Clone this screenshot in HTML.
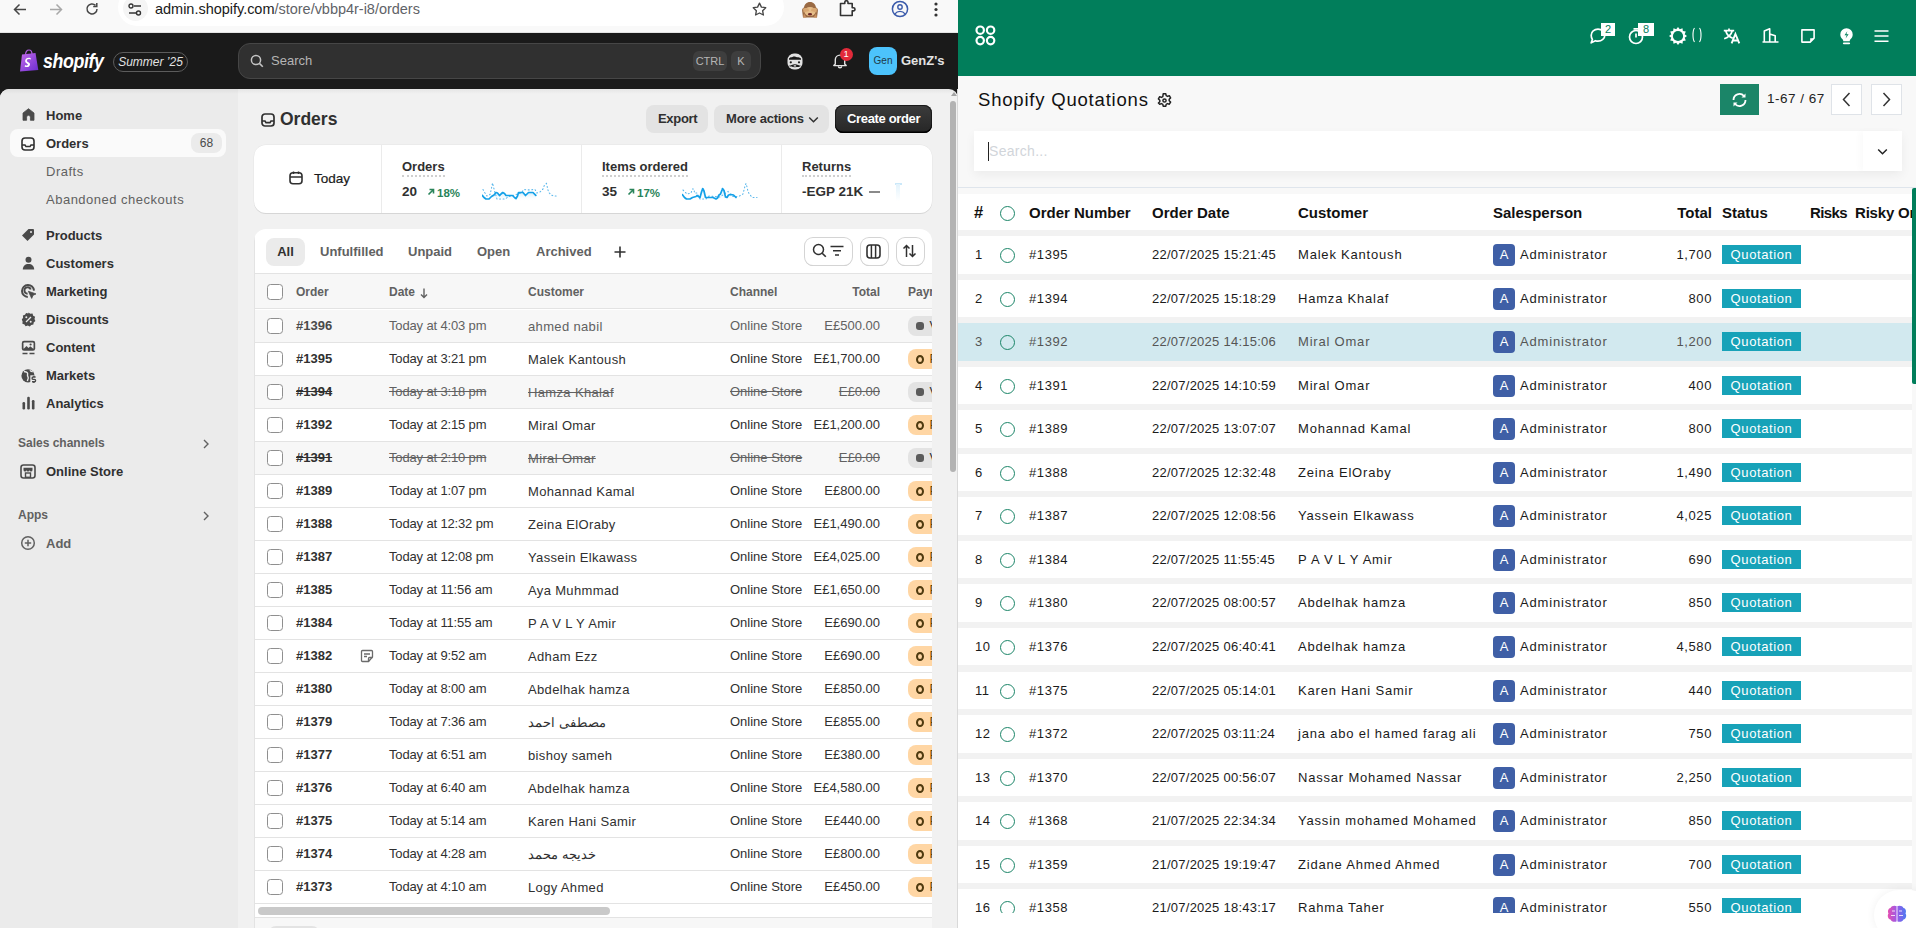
<!DOCTYPE html>
<html><head><meta charset="utf-8"><title>Orders</title>
<style>
*{margin:0;padding:0;box-sizing:border-box}
html,body{width:1916px;height:928px;overflow:hidden;background:#f8f8f8;font-family:"Liberation Sans",sans-serif}
.a{position:absolute;white-space:nowrap}
svg{position:absolute;display:block}
#L{position:absolute;left:0;top:0;width:958px;height:928px;overflow:hidden;background:#1a1a1a}
#chrome{position:absolute;left:0;top:0;width:958px;height:33px;background:#f9f9f9;border-bottom:1px solid #e4e4e4}
#pill{position:absolute;left:118px;top:-12px;width:666px;height:38px;background:#fff;border-radius:19px}
#tune{position:absolute;left:123px;top:-4px;width:25px;height:25px;border-radius:13px;background:#f5f5f5}
.url{left:155px;top:1px;font-size:14.5px;color:#1a1a1a;letter-spacing:-0.02px}
.url span{color:#5f6368}
#panel{position:absolute;left:0;top:89px;width:958px;height:839px;background:#f1f1f1;border-radius:9px 9px 0 0;overflow:hidden}
#side{position:absolute;left:0;top:0;width:238px;height:839px;background:#ebebeb}
.nav{position:absolute;left:46px;font-size:13px;font-weight:700;color:#303030;line-height:16px}
.nav.sub{color:#616161;font-weight:400;font-size:13px;letter-spacing:0.5px}
.sec{position:absolute;left:18px;font-size:12px;font-weight:700;color:#616161;line-height:16px}
.btn{position:absolute;top:105px;white-space:nowrap;height:28px;border-radius:8px;background:#e3e3e3;font-size:13px;font-weight:700;color:#303030;line-height:28px;padding:0 12px}
#card1{position:absolute;left:254px;top:145px;width:678px;height:68px;background:#fff;border-radius:12px;box-shadow:0 1px 0 #d6d6d6, 0 0 0 0.5px #e6e6e6}
.div{position:absolute;top:0;width:1px;height:68px;background:#ebebeb}
.slab{position:absolute;font-size:13px;font-weight:700;color:#303030;line-height:16px;border-bottom:2px dotted #cfcfcf;padding-bottom:0}
.sval{position:absolute;font-size:13px;font-weight:700;color:#303030;line-height:16px}
.pct{position:absolute;font-size:12px;font-weight:700;color:#29845a;line-height:16px}
#card2{position:absolute;left:254px;top:229px;width:678px;height:720px;background:#fff;border-radius:12px 12px 0 0;overflow:hidden}
.tab{position:absolute;top:9px;height:28px;line-height:28px;font-size:13px;font-weight:700;color:#616161;padding:0 8px;border-radius:8px}
.tab.on{background:#ebebeb;color:#303030}
.tbtn{position:absolute;top:8.5px;height:27px;border-radius:8px;background:#fff;box-shadow:0 0 0 1px #d4d4d4, 0 1px 0 #c4c4c4}
#thead{position:absolute;left:0;top:44px;width:678px;height:36px;background:#f7f7f7;border-top:1px solid #e3e3e3;border-bottom:1px solid #e3e3e3}
.th{position:absolute;top:11px;font-size:12px;font-weight:700;color:#616161;line-height:14px}
.lrow{position:absolute;left:0;width:678px;height:33px;background:#fff;border-bottom:1px solid #e3e3e3}
.lrow.gray{background:#f7f7f7}
.lrow span{position:absolute;white-space:nowrap;line-height:16px;top:8px;font-size:13px;color:#303030}
.cb{left:13px;top:8px!important;width:15.5px;height:15.5px;border:1px solid #8f8f8f;border-radius:3.5px;background:#fff}
.c-num{left:42px;font-weight:700}
.c-date{left:135px;letter-spacing:-0.15px}
.c-cust{left:274px;top:9px!important;letter-spacing:0.35px}
.c-cust.ar{font-size:13px!important;direction:rtl;letter-spacing:0}
.c-ch{left:476px}
.c-tot{right:52px}
.gray.arch span{color:#616161}
.gray.arch .c-num{color:#4a4a4a}
.cancel .c-num,.cancel .c-date,.cancel .c-cust,.cancel .c-ch,.cancel .c-tot{text-decoration:line-through;color:#616161}
.cancel .c-num{color:#303030}
.pbadge{left:654px;top:6px!important;width:60px;height:20px!important;border-radius:8px}
.pbadge.o{background:#ffd6a4}
.pbadge.g{background:#e3e3e3}
.pbadge i{position:absolute;left:8px;top:5.5px;width:8px;height:9px;border-radius:50%}
.pbadge b{position:absolute;left:21.5px;top:2px;font-size:12.5px;font-weight:400;color:#5e4200;line-height:16px}
.pbadge.g b{color:#303030}
.pbadge.o i{border:2px solid #4f3a0f}
.pbadge.g i{background:#5a5a5a;border-radius:3px;height:8px;top:6px}

#hscroll{position:absolute;left:4px;top:678px;width:352px;height:8px;border-radius:4px;background:#c9c9c9}
#foot{position:absolute;left:0;top:688px;width:678px;height:40px;background:#f7f7f7;border-top:1px solid #e3e3e3}
#vscroll{position:absolute;left:957px;top:89px;width:1px;height:839px;background:#d9d9d9}
#vthumb{position:absolute;left:950px;top:101px;width:6px;height:371px;border-radius:3px;background:#b3b3b3}

#R{position:absolute;left:958px;top:0;width:958px;height:928px;overflow:hidden;background:#f8f8f8}
#ghead{position:absolute;left:0;top:0;width:958px;height:76px;background:#017e5b}
.rt{position:absolute;white-space:nowrap;color:#1b1b1b}
#title{left:20px;top:89px;font-size:18.5px;color:#111;letter-spacing:0.8px;line-height:22px}
#refresh{position:absolute;left:762px;top:84px;width:39px;height:31px;background:#1b8568}
.pgbtn{position:absolute;top:84px;width:31px;height:31px;background:#fff;border:1px solid #dfe3e8}
#pgtext{left:809px;top:91px;font-size:13.5px;color:#222;letter-spacing:0.5px}
#search{position:absolute;left:16px;top:131px;width:928px;height:40px;background:#fff;box-shadow:0 4px 10px rgba(0,0,0,0.05)}
#sph{left:31px;top:141.5px;font-size:14px;color:#d1d5da;letter-spacing:0.3px;line-height:18px}
#caret{position:absolute;left:30px;top:142px;width:1px;height:19px;background:#222}
#hline{position:absolute;left:0;top:187px;width:958px;height:1px;background:#dfe5ec}
#rhead{position:absolute;left:0;top:194px;width:954px;height:36px;background:#fff;box-shadow:0 3px 5px rgba(0,0,0,0.04)}
.rth{position:absolute;top:10px;font-size:15px;font-weight:700;color:#111;line-height:18px;white-space:nowrap}
.rrow{position:absolute;left:0;width:954px;height:37.5px;background:#fff}
.rrow.hl{background:#d2e9ef}
.rrow span{position:absolute;white-space:nowrap;font-size:13px;color:#1b1b1b;letter-spacing:0.6px;line-height:16px;top:11px}
.rrow.hl span{color:#555}
.r-date{letter-spacing:0.25px!important}
.r-idx{left:17px}
.rc{left:42px;top:12px!important;width:15px;height:15px;border:1.5px solid #1b8568;border-radius:50%}
.r-num{left:71px}
.r-date{left:194px}
.r-cust{left:340px;letter-spacing:0.8px!important}
.r-av{left:535px;top:8px!important;width:22px;height:22px;border-radius:4px;background:#3f5fa6;color:#fff!important;text-align:center;line-height:22px!important;font-size:13px!important;letter-spacing:0!important}
.r-sp{left:562px;letter-spacing:0.85px!important}
.r-tot{right:200px}
.r-st{left:764px;top:9px!important;width:79px;height:19px;background:#17a2b8;color:#fff!important;text-align:center;line-height:19px!important}
#rscroll{position:absolute;left:954px;top:188px;width:4px;height:196px;background:#017e5b;border-radius:2px 0 0 2px}

</style></head>
<body>
<div id="L">
 <div id="chrome">
  <div id="pill"></div>
  <div id="tune"></div>
  <svg style="left:13px;top:3px" width="14" height="13" viewBox="0 0 14 13"><path d="M13 6.5H2M6.5 1.5L1.5 6.5l5 5" fill="none" stroke="#474747" stroke-width="1.5"/></svg>
  <svg style="left:49px;top:3px" width="14" height="13" viewBox="0 0 14 13"><path d="M1 6.5h11M7.5 1.5l5 5-5 5" fill="none" stroke="#a8a8a8" stroke-width="1.5"/></svg>
  <svg style="left:85px;top:2px" width="14" height="14" viewBox="0 0 14 14"><path d="M12 7a5 5 0 1 1-1.5-3.6" fill="none" stroke="#474747" stroke-width="1.5"/><path d="M11.8 1v3.6H8.2" fill="none" stroke="#474747" stroke-width="1.5"/></svg>
  <svg style="left:128px;top:3px" width="14" height="13" viewBox="0 0 14 13"><circle cx="3" cy="3" r="2" fill="none" stroke="#333" stroke-width="1.4"/><path d="M6 3h7" stroke="#333" stroke-width="1.5"/><circle cx="10.5" cy="10" r="2" fill="none" stroke="#333" stroke-width="1.4"/><path d="M1 10h7" stroke="#333" stroke-width="1.5"/></svg>
  <div class="a url">admin.shopify.com<span>/store/vbbp4r-i8/orders</span></div>
  <svg style="left:751px;top:1px" width="17" height="17" viewBox="0 0 24 24"><path d="M12 3l2.7 5.6 6.1.8-4.4 4.3 1.1 6.1L12 16.9l-5.5 2.9 1.1-6.1-4.4-4.3 6.1-.8z" fill="none" stroke="#474747" stroke-width="1.9" stroke-linejoin="round"/></svg>
  <svg style="left:801px;top:1px" width="18" height="17" viewBox="0 0 18 17"><path d="M9 1C5.5 1 3.3 3.5 3 6.5 1.5 7 .8 8.5 1.2 10.5L2 16.5h14l.8-6C17.2 8.5 16.5 7 15 6.5 14.7 3.5 12.5 1 9 1z" fill="#9a6a44"/><ellipse cx="9" cy="10.5" rx="5.6" ry="4.6" fill="#e6be8a"/><path d="M2 7.5c1.5-.8 3.5-.8 5.5.3L8 10 2.5 11.5z" fill="#d9a873"/><path d="M16 7.5c-1.5-.8-3.5-.8-5.5.3L10 10l5.5 1.5z" fill="#d9a873"/><ellipse cx="9" cy="13.2" rx="2.1" ry="1.3" fill="#6b2626"/><path d="M2 16.5l1-4 2.5 4zM16 16.5l-1-4-2.5 4z" fill="#c89060"/></svg>
  <svg style="left:839px;top:0px" width="17" height="17" viewBox="0 0 17 17"><path d="M1.5 3.5h4.3V2.3a1.6 1.6 0 0 1 3.2 0v1.2h4.2v4.2h1.2a1.6 1.6 0 0 1 0 3.2h-1.2v4.6H1.5z" fill="none" stroke="#333" stroke-width="1.6" stroke-linejoin="round"/></svg>
  <svg style="left:891px;top:0px" width="18" height="18" viewBox="0 0 18 18"><circle cx="9" cy="9" r="7.6" fill="none" stroke="#3b5bab" stroke-width="1.5"/><circle cx="9" cy="7" r="2.2" fill="none" stroke="#3b5bab" stroke-width="1.4"/><path d="M4 13.8c1.5-2 3-2.4 5-2.4s3.5.4 5 2.4" fill="none" stroke="#3b5bab" stroke-width="1.4"/></svg>
  <svg style="left:933px;top:1px" width="6" height="16" viewBox="0 0 6 16"><circle cx="3" cy="3" r="1.6" fill="#333"/><circle cx="3" cy="8.5" r="1.6" fill="#333"/><circle cx="3" cy="14" r="1.6" fill="#333"/></svg>
 </div>
 <!-- shopify topbar -->
 <svg style="left:19px;top:49px" width="20" height="23" viewBox="0 0 20 23"><defs><linearGradient id="bg1" x1="0" y1="0" x2="1" y2="1"><stop offset="0" stop-color="#c56bea"/><stop offset="1" stop-color="#6a2bd0"/></linearGradient></defs><path d="M3 5.5l13.5-1.5 2.8 17L1 22.5z" fill="url(#bg1)"/><path d="M6.5 6c0-3 1.5-5 3.5-5s3 2 3 4.5" fill="none" stroke="#b05de0" stroke-width="1.2"/><path d="M12 10.5c-.6-.4-1.4-.6-2.2-.5-1.3.1-2 .9-1.9 1.7.1 1.5 3 1.6 3.1 3.5.1 1.6-1.2 2.8-3 2.9-1 0-1.9-.3-2.4-.7l.5-1.5c.6.4 1.2.6 1.8.6.7 0 1.1-.4 1-.9-.1-1-2.6-1.2-2.8-3.3-.1-2 1.4-3.4 3.6-3.6.8 0 1.4.1 1.8.3z" fill="#fff"/></svg>
 <div class="a" style="left:43px;top:49px;font-size:21px;font-weight:700;font-style:italic;color:#fff;letter-spacing:-0.5px;line-height:24px;transform:scaleX(0.85);transform-origin:0 0">shopify</div>
 <div class="a" style="left:113px;top:52px;width:75px;height:20px;border:1px solid #5c5c5c;border-radius:10px;font-size:12px;font-style:italic;color:#e3e3e3;line-height:18px;text-align:center;letter-spacing:0px">Summer ’25</div>
 <div class="a" style="left:238px;top:43px;width:523px;height:36px;background:#303030;border:1px solid #464646;border-radius:12px"></div>
 <svg style="left:250px;top:54px" width="14" height="14" viewBox="0 0 14 14"><circle cx="6" cy="6" r="4.6" fill="none" stroke="#c4c4c4" stroke-width="1.5"/><path d="M9.4 9.4l3.4 3.4" stroke="#c4c4c4" stroke-width="1.6"/></svg>
 <div class="a" style="left:271px;top:53px;font-size:13px;color:#b5b5b5;line-height:16px">Search</div>
 <div class="a" style="left:693px;top:51px;width:34px;height:20px;background:#3e3e3e;border-radius:6px;font-size:11px;color:#b5b5b5;text-align:center;line-height:20px">CTRL</div>
 <div class="a" style="left:731px;top:51px;width:20px;height:20px;background:#3e3e3e;border-radius:6px;font-size:11px;color:#b5b5b5;text-align:center;line-height:20px">K</div>
 <svg style="left:787px;top:52.5px" width="16" height="17" viewBox="0 0 16 17"><rect x="0.5" y="0.5" width="15" height="16" rx="6.5" fill="#e3e3e3"/><path d="M2 5.5c1-1.6 2.5-1.2 3.5-1.6 1.4-.6 2.5-.3 3.5 0 1.5.4 3.5 0 5 1.6v1.2H2z" fill="#1a1a1a"/><circle cx="3.8" cy="9.3" r="1.1" fill="#1a1a1a"/><circle cx="12" cy="9.3" r="1.1" fill="#1a1a1a"/><path d="M2 12.8c1.8-.2 3.5-1.6 5.9-1.6s4.1 1.4 6 1.6c-1 1.3-3.2 1.4-6 1.4s-5-.1-5.9-1.4z" fill="#1a1a1a"/><rect x="6.6" y="12.3" width="2.6" height="1.3" rx=".6" fill="#e3e3e3"/></svg>
 <svg style="left:831.5px;top:53px" width="16" height="16" viewBox="0 0 16 16"><path d="M3.3 11V6.8a4.7 4.7 0 0 1 9.4 0V11l1.5 1.6H1.8z" fill="none" stroke="#e3e3e3" stroke-width="1.4" stroke-linejoin="round"/><path d="M6.4 13.2a1.6 1.6 0 0 0 3.2 0" fill="none" stroke="#e3e3e3" stroke-width="1.4"/></svg>
 <div class="a" style="left:840px;top:48px;width:12.5px;height:12.5px;border-radius:6.5px;background:#e22a3a;color:#fff;font-size:9.5px;font-weight:400;text-align:center;line-height:12.5px">1</div>
 <div class="a" style="left:869px;top:47px;width:28px;height:28px;border-radius:8px;background:#4cc3fc;font-size:10px;color:#1e3a4a;text-align:center;line-height:28px">Gen</div>
 <div class="a" style="left:901px;top:53px;font-size:13px;font-weight:700;color:#e3e3e3;line-height:16px">GenZ's</div>

 <div id="panel">
  <div id="side"></div>
  <div class="a" style="left:0;top:0;width:958px;height:5px;background:linear-gradient(rgba(0,0,0,0.05),rgba(0,0,0,0))"></div>
 </div>
 <!-- sidebar content (page coords) -->
 <svg style="left:22px;top:108px" width="13" height="13" viewBox="0 0 13 13"><path d="M6.5.7L1 5v7.3h3.6V9.2a1.9 1.9 0 0 1 3.8 0v3.1H12V5z" fill="#4a4a4a" stroke="#4a4a4a" stroke-width="0.8" stroke-linejoin="round"/></svg>
 <div class="nav" style="top:108px">Home</div>
 <div class="a" style="left:10px;top:129px;width:216px;height:28px;background:#fafafa;border-radius:8px"></div>
 <div class="a" style="left:191px;top:133px;width:31px;height:20px;background:#ebebeb;border-radius:8px;font-size:12px;color:#4a4a4a;text-align:center;line-height:20px">68</div>
 <svg style="left:21px;top:137px" width="14" height="14" viewBox="0 0 14 14"><rect x="1" y="1" width="12" height="12" rx="3" fill="none" stroke="#303030" stroke-width="1.6"/><path d="M1 8h3l1 1.6h4L10 8h3" fill="none" stroke="#303030" stroke-width="1.5"/></svg>
 <div class="nav" style="top:136px">Orders</div>
 <div class="nav sub" style="top:164px">Drafts</div>
 <div class="nav sub" style="top:192px">Abandoned checkouts</div>
 <svg style="left:21px;top:228px" width="14" height="14" viewBox="0 0 14 14"><path d="M7.5 1H12a1 1 0 0 1 1 1v4.5L6.5 13 1 7.5z" fill="#4a4a4a"/><circle cx="10" cy="4" r="1" fill="#ebebeb"/></svg>
 <div class="nav" style="top:228px">Products</div>
 <svg style="left:22px;top:256px" width="13" height="14" viewBox="0 0 13 14"><circle cx="6.5" cy="3.8" r="3" fill="#4a4a4a"/><path d="M.8 13.5c0-3.5 2.4-5.5 5.7-5.5s5.7 2 5.7 5.5z" fill="#4a4a4a"/></svg>
 <div class="nav" style="top:256px">Customers</div>
 <svg style="left:21px;top:284px" width="16" height="16" viewBox="0 0 16 16"><path d="M13 6.6A6 6 0 1 0 6.8 13" fill="none" stroke="#4a4a4a" stroke-width="2"/><path d="M9.7 5.6A3.2 3.2 0 1 0 6.6 9.7" fill="none" stroke="#4a4a4a" stroke-width="1.9"/><path d="M7.4 7.3l7.6 2.6-3 1.4-1.3 3.1z" fill="#4a4a4a" stroke="#4a4a4a" stroke-width="0.8" stroke-linejoin="round"/></svg>
 <div class="nav" style="top:284px">Marketing</div>
 <svg style="left:21px;top:312px" width="15" height="15" viewBox="0 0 15 15"><path d="M7.5.5l1.8 1.3 2.2-.2.7 2.1 1.9 1.1-.6 2.2.9 2-1.7 1.4-.3 2.2-2.2.3-1.4 1.7-2-1-2.2.7-1.1-1.9-2.1-.7.2-2.2L.8 7.5l1.3-1.8-.2-2.2 2.1-.7L5.1 1 7.3 1.6z" fill="#4a4a4a"/><path d="M5 10l5-5" stroke="#ebebeb" stroke-width="1.3"/><circle cx="5.3" cy="5.3" r="1" fill="#ebebeb"/><circle cx="9.7" cy="9.7" r="1" fill="#ebebeb"/></svg>
 <div class="nav" style="top:312px">Discounts</div>
 <svg style="left:21px;top:340px" width="15" height="15" viewBox="0 0 15 15"><rect x="0.8" y="0.8" width="13.4" height="10" rx="2.2" fill="#4a4a4a"/><rect x="2.5" y="2.5" width="10" height="6.6" rx="0.8" fill="#ebebeb"/><path d="M2.5 9.1l3-3.2 2 2 1.8-1.7 3.2 2.9z" fill="#4a4a4a"/><circle cx="9.6" cy="4.5" r="1.1" fill="#4a4a4a"/><path d="M1.5 13.5h5M8.5 13.5h5" stroke="#4a4a4a" stroke-width="1.5"/></svg>
 <div class="nav" style="top:340px">Content</div>
 <svg style="left:21px;top:368px" width="16" height="16" viewBox="0 0 16 16"><circle cx="7" cy="7.8" r="6.6" fill="#4a4a4a"/><path d="M3 3.5c1.6.4 2.6.2 3.4 1.4.8 1.3-.6 2.3.5 3.6 1 1.2.2 2.7-.6 4.6" fill="none" stroke="#ebebeb" stroke-width="1.4"/><path d="M9 2.2c.5 1.2 1.8 1.5 2.8 1.3" fill="none" stroke="#ebebeb" stroke-width="1.3"/><rect x="9.3" y="7.3" width="6.7" height="8.7" fill="#ebebeb"/><path d="M14.6 9h-2.3a1.2 1.2 0 0 0 0 2.4h1.1a1.2 1.2 0 0 1 0 2.4H11M12.9 7.8V9M12.9 13.8v1.3" fill="none" stroke="#4a4a4a" stroke-width="1.4"/></svg>
 <div class="nav" style="top:368px">Markets</div>
 <svg style="left:22px;top:396px" width="13" height="14" viewBox="0 0 13 14"><rect x="0.5" y="6" width="2.6" height="7.5" rx="1.2" fill="#4a4a4a"/><rect x="5.2" y="0.8" width="2.6" height="12.7" rx="1.2" fill="#4a4a4a"/><rect x="9.9" y="4" width="2.6" height="9.5" rx="1.2" fill="#4a4a4a"/></svg>
 <div class="nav" style="top:396px">Analytics</div>
 <div class="sec" style="top:435px">Sales channels</div>
 <svg style="left:202px;top:439px" width="8" height="10" viewBox="0 0 8 10"><path d="M2 1l4 4-4 4" fill="none" stroke="#616161" stroke-width="1.4"/></svg>
 <svg style="left:20px;top:464px" width="16" height="15" viewBox="0 0 16 15"><rect x="1" y="1" width="14" height="13" rx="2.5" fill="none" stroke="#4a4a4a" stroke-width="1.6"/><path d="M3.5 3.8h9v2.3a1.5 1.5 0 0 1-3 0 1.5 1.5 0 0 1-3 0 1.5 1.5 0 0 1-3 0z" fill="#4a4a4a"/><rect x="5.5" y="9" width="5" height="4.3" fill="none" stroke="#4a4a4a" stroke-width="1.4"/></svg>
 <div class="nav" style="top:464px">Online Store</div>
 <div class="sec" style="top:507px">Apps</div>
 <svg style="left:202px;top:511px" width="8" height="10" viewBox="0 0 8 10"><path d="M2 1l4 4-4 4" fill="none" stroke="#616161" stroke-width="1.4"/></svg>
 <svg style="left:20px;top:535px" width="16" height="16" viewBox="0 0 16 16"><circle cx="8" cy="8" r="6.3" fill="none" stroke="#616161" stroke-width="1.5"/><path d="M8 4.8v6.4M4.8 8h6.4" stroke="#616161" stroke-width="1.5"/></svg>
 <div class="nav" style="top:536px;color:#616161">Add</div>

 <!-- main header -->
 <svg style="left:261px;top:112.5px" width="14" height="14" viewBox="0 0 14 14"><rect x="1" y="1" width="12" height="12" rx="3" fill="none" stroke="#303030" stroke-width="1.7"/><path d="M1 8h3l1 1.6h4L10 8h3" fill="none" stroke="#303030" stroke-width="1.6"/></svg>
 <div class="a" style="left:280px;top:109px;font-size:17.5px;font-weight:700;color:#303030;line-height:20px">Orders</div>
 <div class="btn" style="left:646px;width:62px;letter-spacing:-0.3px">Export</div>
 <div class="btn" style="left:714px;width:115px;letter-spacing:-0.2px">More actions</div>
 <svg style="left:808px;top:116px" width="11" height="8" viewBox="0 0 11 8"><path d="M1.2 1.5l4.3 4.3 4.3-4.3" fill="none" stroke="#303030" stroke-width="1.5"/></svg>
 <div class="btn" style="left:835px;top:105px;width:97px;height:28px;line-height:28px;letter-spacing:-0.35px;background:linear-gradient(#3c3c3c,#262626);color:#fff;box-shadow:inset 0 -1.5px 0 #000, inset 0 0 0 1px #1a1a1a">Create order</div>

 <div id="card1">
  <div class="div" style="left:127px"></div>
  <div class="div" style="left:327px"></div>
  <div class="div" style="left:527px"></div>
  <svg style="left:35px;top:26px" width="14" height="14" viewBox="0 0 14 14"><rect x="1" y="1.8" width="12" height="11" rx="3" fill="none" stroke="#303030" stroke-width="1.6"/><path d="M1 6h12M4.5 .5v2.5M9.5 .5v2.5" stroke="#303030" stroke-width="1.5"/></svg>
  <div class="sval" style="left:60px;top:26px;font-weight:400;color:#1a1a1a;font-size:13.5px;-webkit-text-stroke:0.2px #1a1a1a">Today</div>
  <div class="slab" style="left:148px;top:14px">Orders</div>
  <div class="sval" style="left:148px;top:39px;font-size:13.5px">20</div>
  <svg style="left:173px;top:43px" width="8" height="8" viewBox="0 0 8 8"><path d="M1.5 6.5L6.5 1.5M2.5 1.5h4v4" fill="none" stroke="#29845a" stroke-width="1.6"/></svg>
  <div class="pct" style="left:183px;top:39.5px;font-size:11.5px">18%</div>
  <div class="slab" style="left:348px;top:14px">Items ordered</div>
  <div class="sval" style="left:348px;top:39px;font-size:13.5px">35</div>
  <svg style="left:373px;top:43px" width="8" height="8" viewBox="0 0 8 8"><path d="M1.5 6.5L6.5 1.5M2.5 1.5h4v4" fill="none" stroke="#29845a" stroke-width="1.6"/></svg>
  <div class="pct" style="left:383px;top:39.5px;font-size:11.5px">17%</div>
  <div class="slab" style="left:548px;top:14px">Returns</div>
  <div class="sval" style="left:548px;top:39px;font-size:13.5px">-EGP 21K</div>
  <div class="a" style="left:615px;top:46px;width:11px;height:1.5px;background:#8a8a8a"></div>
  <svg style="left:228px;top:36px" width="80" height="22" viewBox="0 0 80 22"><defs><linearGradient id="fg228" x1="0" y1="0" x2="0" y2="1"><stop offset="0" stop-color="#bfe3f8"/><stop offset="1" stop-color="#ffffff" stop-opacity="0"/></linearGradient></defs><path d="M0.3,14.4 L0.3,14.4 L2.0,16.5 L4.0,18.0 L7.0,18.0 L9.5,15.5 L12.0,14.0 L14.0,11.5 L15.5,12.0 L17.5,14.6 L19.0,13.0 L20.7,11.5 L22.5,12.5 L24.0,14.5 L30.5,14.5 L32.5,16.5 L34.0,17.7 L35.5,15.0 L36.5,11.5 L41.0,11.5 L43.5,14.5 L46.5,11.5 L51.0,11.5 L53.8,14.4 L53.8,20 L0.3,20 Z" fill="url(#fg228)" opacity="0.7"/><polyline points="1.0,8.5 3.0,12.0 5.0,15.0 8.0,13.5 9.0,9.5 10.5,2.0 11.5,5.8 12.5,10.0 15.0,18.0 19.0,18.0 23.0,18.0 26.0,16.0 39.0,12.0 42.0,8.5 45.0,9.0 53.0,8.5 55.0,12.0 58.0,11.0 61.0,8.0 62.5,4.0 64.5,2.5 65.5,7.0 66.5,11.0 69.0,14.0 72.0,15.0 76.0,15.0" fill="none" stroke="#5cb8ec" stroke-width="1.1" stroke-dasharray="0.9 2.6" stroke-linecap="round"/><polyline points="0.3,14.4 2.0,16.5 4.0,18.0 7.0,18.0 9.5,15.5 12.0,14.0 14.0,11.5 15.5,12.0 17.5,14.6 19.0,13.0 20.7,11.5 22.5,12.5 24.0,14.5 30.5,14.5 32.5,16.5 34.0,17.7 35.5,15.0 36.5,11.5 41.0,11.5 43.5,14.5 46.5,11.5 51.0,11.5 53.8,14.4" fill="none" stroke="#13a0e8" stroke-width="1.7" stroke-linejoin="round" stroke-linecap="round"/></svg>
  <svg style="left:428px;top:36px" width="80" height="22" viewBox="0 0 80 22"><defs><linearGradient id="fg428" x1="0" y1="0" x2="0" y2="1"><stop offset="0" stop-color="#bfe3f8"/><stop offset="1" stop-color="#ffffff" stop-opacity="0"/></linearGradient></defs><path d="M0.3,13.6 L0.3,13.6 L2.5,16.5 L4.5,18.0 L8.0,18.0 L10.5,16.5 L14.0,15.5 L15.0,14.5 L18.0,16.5 L19.5,11.0 L20.7,7.5 L22.0,10.0 L23.5,16.5 L31.0,16.5 L34.0,18.0 L35.5,17.0 L37.0,14.0 L38.5,13.0 L40.0,9.0 L40.5,7.5 L42.0,9.5 L43.5,16.0 L45.0,16.5 L46.5,14.0 L49.0,13.5 L51.5,14.0 L54.0,16.5 L54.0,20 L0.3,20 Z" fill="url(#fg428)" opacity="0.7"/><polyline points="1.0,9.0 5.0,13.0 9.0,12.0 10.5,8.0 12.0,8.0 12.5,12.0 15.0,12.0 18.0,18.0 20.0,18.0 24.0,18.0 27.0,15.0 38.0,16.0 46.0,10.5 50.0,15.0 53.0,16.0 57.5,15.0 61.0,13.0 62.0,9.0 63.0,5.0 64.0,2.5 65.0,6.0 66.0,10.5 67.5,13.5 70.5,16.5 75.0,16.5" fill="none" stroke="#5cb8ec" stroke-width="1.1" stroke-dasharray="0.9 2.6" stroke-linecap="round"/><polyline points="0.3,13.6 2.5,16.5 4.5,18.0 8.0,18.0 10.5,16.5 14.0,15.5 15.0,14.5 18.0,16.5 19.5,11.0 20.7,7.5 22.0,10.0 23.5,16.5 31.0,16.5 34.0,18.0 35.5,17.0 37.0,14.0 38.5,13.0 40.0,9.0 40.5,7.5 42.0,9.5 43.5,16.0 45.0,16.5 46.5,14.0 49.0,13.5 51.5,14.0 54.0,16.5" fill="none" stroke="#13a0e8" stroke-width="1.7" stroke-linejoin="round" stroke-linecap="round"/></svg>
  <div class="a" style="left:641px;top:38px;width:7px;height:1.5px;background:#cbe8f9"></div><div class="a" style="left:642px;top:39px;width:4px;height:17px;background:linear-gradient(#e3f3fc,#fff)"></div>
 </div>

 <div id="card2">
  <div class="tab on" style="left:12px;width:39px;text-align:center">All</div>
  <div class="tab" style="left:58px">Unfulfilled</div>
  <div class="tab" style="left:146px">Unpaid</div>
  <div class="tab" style="left:215px">Open</div>
  <div class="tab" style="left:274px">Archived</div>
  <svg style="left:359px;top:16px" width="14" height="14" viewBox="0 0 14 14"><path d="M7 1.5v11M1.5 7h11" stroke="#303030" stroke-width="1.6"/></svg>
  <div class="tbtn" style="left:550.5px;width:47px"></div>
  <svg style="left:558px;top:14px" width="16" height="16" viewBox="0 0 16 16"><circle cx="6.5" cy="6.5" r="5" fill="none" stroke="#303030" stroke-width="1.5"/><path d="M10.2 10.2l3.6 3.6" stroke="#303030" stroke-width="1.6"/></svg>
  <svg style="left:576px;top:16px" width="14" height="12" viewBox="0 0 14 12"><path d="M0.5 1.5h13M3 5.8h8M5 10h4" stroke="#303030" stroke-width="1.5"/></svg>
  <div class="tbtn" style="left:606.5px;width:27px"></div>
  <svg style="left:612px;top:15px" width="15" height="15" viewBox="0 0 15 15"><rect x="1" y="1" width="13" height="13" rx="3" fill="none" stroke="#303030" stroke-width="1.6"/><path d="M5.4 1v13M9.6 1v13" stroke="#303030" stroke-width="1.5"/></svg>
  <div class="tbtn" style="left:642.5px;width:27px"></div>
  <svg style="left:648px;top:15px" width="15" height="14" viewBox="0 0 15 14"><path d="M4.5 13V1.5M1.5 4.5l3-3 3 3" fill="none" stroke="#303030" stroke-width="1.5"/><path d="M10.5 1v11.5M7.5 9.5l3 3 3-3" fill="none" stroke="#303030" stroke-width="1.5"/></svg>
  <div id="thead">
   <span style="position:absolute;left:13px;top:10px;width:15.5px;height:15.5px;border:1px solid #8f8f8f;border-radius:3.5px;background:#fff"></span>
   <div class="th" style="left:42px">Order</div>
   <div class="th" style="left:135px">Date</div><svg style="left:166px;top:13.5px" width="8" height="11" viewBox="0 0 8 11"><path d="M4 0.5v9M1 6.5l3 3 3-3" fill="none" stroke="#616161" stroke-width="1.4"/></svg>
   <div class="th" style="left:274px">Customer</div>
   <div class="th" style="left:476px">Channel</div>
   <div class="th" style="right:52px">Total</div>
   <div class="th" style="left:654px">Payment</div>
  </div>
<div class="lrow gray arch" style="top:81px"><span class="cb"></span><span class="c-num">#1396</span><span class="c-date">Today at 4:03 pm</span><span class="c-cust">ahmed nabil</span><span class="c-ch">Online Store</span><span class="c-tot">E£500.00</span><span class="pbadge g"><i></i><b>Voided</b></span></div>
<div class="lrow" style="top:114px"><span class="cb"></span><span class="c-num">#1395</span><span class="c-date">Today at 3:21 pm</span><span class="c-cust">Malek Kantoush</span><span class="c-ch">Online Store</span><span class="c-tot">E£1,700.00</span><span class="pbadge o"><i></i><b>Payment pending</b></span></div>
<div class="lrow gray cancel" style="top:147px"><span class="cb"></span><span class="c-num">#1394</span><span class="c-date">Today at 3:18 pm</span><span class="c-cust">Hamza Khalaf</span><span class="c-ch">Online Store</span><span class="c-tot">E£0.00</span><span class="pbadge g"><i></i><b>Voided</b></span></div>
<div class="lrow" style="top:180px"><span class="cb"></span><span class="c-num">#1392</span><span class="c-date">Today at 2:15 pm</span><span class="c-cust">Miral Omar</span><span class="c-ch">Online Store</span><span class="c-tot">E£1,200.00</span><span class="pbadge o"><i></i><b>Payment pending</b></span></div>
<div class="lrow gray cancel" style="top:213px"><span class="cb"></span><span class="c-num">#1391</span><span class="c-date">Today at 2:10 pm</span><span class="c-cust">Miral Omar</span><span class="c-ch">Online Store</span><span class="c-tot">E£0.00</span><span class="pbadge g"><i></i><b>Voided</b></span></div>
<div class="lrow" style="top:246px"><span class="cb"></span><span class="c-num">#1389</span><span class="c-date">Today at 1:07 pm</span><span class="c-cust">Mohannad Kamal</span><span class="c-ch">Online Store</span><span class="c-tot">E£800.00</span><span class="pbadge o"><i></i><b>Payment pending</b></span></div>
<div class="lrow" style="top:279px"><span class="cb"></span><span class="c-num">#1388</span><span class="c-date">Today at 12:32 pm</span><span class="c-cust">Zeina ElOraby</span><span class="c-ch">Online Store</span><span class="c-tot">E£1,490.00</span><span class="pbadge o"><i></i><b>Payment pending</b></span></div>
<div class="lrow" style="top:312px"><span class="cb"></span><span class="c-num">#1387</span><span class="c-date">Today at 12:08 pm</span><span class="c-cust">Yassein Elkawass</span><span class="c-ch">Online Store</span><span class="c-tot">E£4,025.00</span><span class="pbadge o"><i></i><b>Payment pending</b></span></div>
<div class="lrow" style="top:345px"><span class="cb"></span><span class="c-num">#1385</span><span class="c-date">Today at 11:56 am</span><span class="c-cust">Aya Muhmmad</span><span class="c-ch">Online Store</span><span class="c-tot">E£1,650.00</span><span class="pbadge o"><i></i><b>Payment pending</b></span></div>
<div class="lrow" style="top:378px"><span class="cb"></span><span class="c-num">#1384</span><span class="c-date">Today at 11:55 am</span><span class="c-cust">P A V L Y Amir</span><span class="c-ch">Online Store</span><span class="c-tot">E£690.00</span><span class="pbadge o"><i></i><b>Payment pending</b></span></div>
<div class="lrow" style="top:411px"><span class="cb"></span><span class="c-num">#1382</span><svg class="note" style="left:106px;top:9px" width="14" height="14" viewBox="0 0 14 14"><path d="M2.5 1.5h9a1 1 0 0 1 1 1v5.5l-4 4.5H2.5a1 1 0 0 1-1-1v-9a1 1 0 0 1 1-1z" fill="none" stroke="#6b6b6b" stroke-width="1.3"/><path d="M4 5h6M4 7.5h3" stroke="#6b6b6b" stroke-width="1.3"/><path d="M8.5 12.5v-3a1 1 0 0 1 1-1h3" fill="none" stroke="#6b6b6b" stroke-width="1.3"/></svg><span class="c-date">Today at 9:52 am</span><span class="c-cust">Adham Ezz</span><span class="c-ch">Online Store</span><span class="c-tot">E£690.00</span><span class="pbadge o"><i></i><b>Payment pending</b></span></div>
<div class="lrow" style="top:444px"><span class="cb"></span><span class="c-num">#1380</span><span class="c-date">Today at 8:00 am</span><span class="c-cust">Abdelhak hamza</span><span class="c-ch">Online Store</span><span class="c-tot">E£850.00</span><span class="pbadge o"><i></i><b>Payment pending</b></span></div>
<div class="lrow" style="top:477px"><span class="cb"></span><span class="c-num">#1379</span><span class="c-date">Today at 7:36 am</span><span class="c-cust ar">مصطفى احمد</span><span class="c-ch">Online Store</span><span class="c-tot">E£855.00</span><span class="pbadge o"><i></i><b>Payment pending</b></span></div>
<div class="lrow" style="top:510px"><span class="cb"></span><span class="c-num">#1377</span><span class="c-date">Today at 6:51 am</span><span class="c-cust">bishoy sameh</span><span class="c-ch">Online Store</span><span class="c-tot">E£380.00</span><span class="pbadge o"><i></i><b>Payment pending</b></span></div>
<div class="lrow" style="top:543px"><span class="cb"></span><span class="c-num">#1376</span><span class="c-date">Today at 6:40 am</span><span class="c-cust">Abdelhak hamza</span><span class="c-ch">Online Store</span><span class="c-tot">E£4,580.00</span><span class="pbadge o"><i></i><b>Payment pending</b></span></div>
<div class="lrow" style="top:576px"><span class="cb"></span><span class="c-num">#1375</span><span class="c-date">Today at 5:14 am</span><span class="c-cust">Karen Hani Samir</span><span class="c-ch">Online Store</span><span class="c-tot">E£440.00</span><span class="pbadge o"><i></i><b>Payment pending</b></span></div>
<div class="lrow" style="top:609px"><span class="cb"></span><span class="c-num">#1374</span><span class="c-date">Today at 4:28 am</span><span class="c-cust ar">خديجه محمد</span><span class="c-ch">Online Store</span><span class="c-tot">E£800.00</span><span class="pbadge o"><i></i><b>Payment pending</b></span></div>
<div class="lrow" style="top:642px"><span class="cb"></span><span class="c-num">#1373</span><span class="c-date">Today at 4:10 am</span><span class="c-cust">Logy Ahmed</span><span class="c-ch">Online Store</span><span class="c-tot">E£450.00</span><span class="pbadge o"><i></i><b>Payment pending</b></span></div>
  <div id="hscroll"></div>
  <div id="foot"></div>
  <div class="a" style="left:0;top:0;width:1px;height:720px;background:#e3e3e3"></div>
  <div class="a" style="left:14px;top:697px;width:52px;height:28px;border-radius:8px;background:#e3e3e3"></div>
 </div>
 <div id="vscroll"></div>
 <svg style="left:950px;top:91px" width="8" height="6" viewBox="0 0 8 6"><path d="M1 5l3-4 3 4z" fill="#a3a3a3"/></svg>
 <div id="vthumb"></div>
</div>

<div id="R">
 <div id="ghead">
  <svg style="left:17px;top:25px" width="21" height="21" viewBox="0 0 21 21"><circle cx="5.2" cy="5.2" r="3.7" fill="none" stroke="#fff" stroke-width="2.2"/><circle cx="15.6" cy="5.2" r="3.7" fill="none" stroke="#fff" stroke-width="2.2"/><circle cx="5.2" cy="15.6" r="3.7" fill="none" stroke="#fff" stroke-width="2.2"/><circle cx="15.6" cy="15.6" r="3.7" fill="none" stroke="#fff" stroke-width="2.2"/></svg>
  <!-- chat -->
  <svg style="left:631px;top:27px" width="18" height="18" viewBox="0 0 18 18"><path d="M9 2.2c3.8 0 6.8 2.6 6.8 6s-3 6-6.8 6c-.9 0-1.8-.2-2.6-.5L2.2 15.8l1.2-3.3C2.6 11.4 2.2 10 2.2 8.2c0-3.4 3-6 6.8-6z" fill="none" stroke="#fff" stroke-width="1.7" stroke-linejoin="round"/></svg>
  <div class="rt" style="left:643px;top:23px;width:14px;height:13px;background:#fff;color:#017e5b;font-size:11px;text-align:center;line-height:13px">2</div>
  <!-- timer -->
  <svg style="left:670px;top:27px" width="17" height="18" viewBox="0 0 17 18"><circle cx="8" cy="10" r="6.5" fill="none" stroke="#fff" stroke-width="1.7"/><path d="M8 6.5v4M5.5 1.8h5" stroke="#fff" stroke-width="1.7"/></svg>
  <div class="rt" style="left:680px;top:23px;width:16px;height:13px;background:#fff;color:#017e5b;font-size:11px;text-align:center;line-height:13px">8</div>
  <!-- sun -->
  <svg style="left:711px;top:26.5px" width="18" height="18" viewBox="0 0 18 18"><path d="M9.00 0.00 L10.79 2.34 L13.50 1.21 L13.88 4.12 L16.79 4.50 L15.66 7.21 L18.00 9.00 L15.66 10.79 L16.79 13.50 L13.88 13.88 L13.50 16.79 L10.79 15.66 L9.00 18.00 L7.21 15.66 L4.50 16.79 L4.12 13.88 L1.21 13.50 L2.34 10.79 L0.00 9.00 L2.34 7.21 L1.21 4.50 L4.12 4.12 L4.50 1.21 L7.21 2.34Z" fill="#fff"/><circle cx="9" cy="9" r="5.1" fill="#017e5b"/></svg>
  <svg style="left:733px;top:27px" width="12" height="16" viewBox="0 0 12 16"><path d="M3.5 1C1.5 3.5 1.5 12.5 3.5 15M8.5 1c2 2.5 2 11.5 0 14" fill="none" stroke="#fff" stroke-width="1.1"/></svg>
  <!-- translate -->
  <svg style="left:765px;top:28px" width="18" height="16" viewBox="0 0 18 16"><path d="M0.8 2.6h10.4M6 0.6v2M2.8 3c.9 3.6 3.3 6 7 7.3M9.2 3C8.2 6.8 5.6 9.3 1.2 10.8" fill="none" stroke="#fff" stroke-width="1.7"/><path d="M8.6 15.3l3.8-9.3 3.9 9.3M10 12.5h4.8" fill="none" stroke="#fff" stroke-width="1.9"/></svg>
  <!-- building -->
  <svg style="left:804px;top:28px" width="17" height="15" viewBox="0 0 17 15"><path d="M0.5 14h16M2.3 14V3l5.4-2.2V14M7.7 6l5.5 1.8V14" fill="none" stroke="#fff" stroke-width="1.6" stroke-linejoin="round"/></svg>
  <!-- note -->
  <svg style="left:843px;top:29px" width="14" height="14" viewBox="0 0 14 14"><path d="M0.9 0.9h12.2v8.2l-4 4H0.9z" fill="none" stroke="#fff" stroke-width="1.6" stroke-linejoin="round"/><path d="M13 9.2H9.2V13z" fill="#fff"/></svg>
  <!-- bulb -->
  <svg style="left:882px;top:28px" width="13" height="17" viewBox="0 0 13 17"><path d="M6.5 0.3a6.2 6.2 0 0 1 6.2 6.2c0 2.2-1 3.4-2 4.5-.7.8-1 1.4-1 2.3H3.3c0-.9-.3-1.5-1-2.3-1-1.1-2-2.3-2-4.5A6.2 6.2 0 0 1 6.5.3z" fill="#fff"/><path d="M7.3 3.2L4.5 7.3h2.2l-1.1 3.3 3-4.3H6.4z" fill="#017e5b"/><path d="M3.8 15.3h5.4" stroke="#fff" stroke-width="1.8" stroke-linecap="round"/></svg>
  <!-- hamburger -->
  <svg style="left:916px;top:30px" width="15" height="12" viewBox="0 0 15 12"><path d="M0.5 1h14M0.5 6h14M0.5 11.2h14" stroke="#fff" stroke-width="1.6"/></svg>
 </div>
 <div class="rt" id="title">Shopify Quotations</div>
 <svg style="left:199px;top:92.5px" width="15" height="15" viewBox="0 0 15 15"><path d="M6.2.8h2.6l.4 1.9 1.3.7 1.8-.7 1.3 2.2-1.4 1.3v1.5l1.4 1.3-1.3 2.2-1.8-.6-1.3.7-.4 1.9H6.2l-.4-1.9-1.3-.7-1.8.6L1.4 10l1.4-1.3V7.2L1.4 5.9l1.3-2.2 1.8.7 1.3-.7z" fill="none" stroke="#222" stroke-width="1.5" stroke-linejoin="round"/><circle cx="7.5" cy="7.5" r="1.6" fill="none" stroke="#222" stroke-width="1.5"/></svg>
 <div id="refresh"></div>
 <svg style="left:773px;top:92px" width="17" height="16" viewBox="0 0 17 16"><path d="M2.5 8a6 6 0 0 1 10.5-4" fill="none" stroke="#fff" stroke-width="1.8"/><path d="M14.5 8a6 6 0 0 1-10.5 4" fill="none" stroke="#fff" stroke-width="1.8"/><path d="M14.5 1.5v4h-4z" fill="#fff"/><path d="M2.5 14.5v-4h4z" fill="#fff"/></svg>
 <div class="rt" id="pgtext">1-67 / 67</div>
 <div class="pgbtn" style="left:873px"></div>
 <svg style="left:884px;top:92px" width="9" height="15" viewBox="0 0 9 15"><path d="M7.5 1L1.5 7.5l6 6.5" fill="none" stroke="#333" stroke-width="1.5"/></svg>
 <div class="pgbtn" style="left:913px"></div>
 <svg style="left:924px;top:92px" width="9" height="15" viewBox="0 0 9 15"><path d="M1.5 1l6 6.5-6 6.5" fill="none" stroke="#333" stroke-width="1.5"/></svg>
 <div id="search"></div>
 <div class="a" style="left:905px;top:131px;width:39px;height:40px;background:#fff;box-shadow:-4px 0 6px rgba(0,0,0,0.02)"></div>
 <svg style="left:919px;top:147.5px" width="11" height="8" viewBox="0 0 11 8"><path d="M1.2 1.5l4.3 4.2 4.3-4.2" fill="none" stroke="#222" stroke-width="1.5"/></svg>
 <div class="rt" id="sph">Search...</div>
 <div id="caret"></div>
 <div id="hline"></div>
 <div id="rhead">
  <div class="rth" style="left:16px;top:9px;font-size:16.5px">#</div>
  <span class="a" style="left:42px;top:12px;width:15px;height:15px;border:1.5px solid #1b8568;border-radius:50%"></span>
  <div class="rth" style="left:71px">Order Number</div>
  <div class="rth" style="left:194px">Order Date</div>
  <div class="rth" style="left:340px">Customer</div>
  <div class="rth" style="left:535px">Salesperson</div>
  <div class="rth" style="right:200px">Total</div>
  <div class="rth" style="left:764px">Status</div>
  <div class="rth" style="left:852px;letter-spacing:-0.6px">Risks</div>
  <div class="rth" style="left:897px;letter-spacing:-0.2px">Risky Order</div>
 </div>
<div class="a" style="left:0;top:230px;width:954px;height:690px;background:#f2f2f2"></div>
<div class="rrow" style="top:236.00px"><span class="r-idx">1</span><span class="rc"></span><span class="r-num">#1395</span><span class="r-date">22/07/2025 15:21:45</span><span class="r-cust">Malek Kantoush</span><span class="r-av">A</span><span class="r-sp">Administrator</span><span class="r-tot">1,700</span><span class="r-st">Quotation</span></div>
<div class="rrow" style="top:279.55px"><span class="r-idx">2</span><span class="rc"></span><span class="r-num">#1394</span><span class="r-date">22/07/2025 15:18:29</span><span class="r-cust">Hamza Khalaf</span><span class="r-av">A</span><span class="r-sp">Administrator</span><span class="r-tot">800</span><span class="r-st">Quotation</span></div>
<div class="rrow hl" style="top:323.10px"><span class="r-idx">3</span><span class="rc"></span><span class="r-num">#1392</span><span class="r-date">22/07/2025 14:15:06</span><span class="r-cust">Miral Omar</span><span class="r-av">A</span><span class="r-sp">Administrator</span><span class="r-tot">1,200</span><span class="r-st">Quotation</span></div>
<div class="rrow" style="top:366.65px"><span class="r-idx">4</span><span class="rc"></span><span class="r-num">#1391</span><span class="r-date">22/07/2025 14:10:59</span><span class="r-cust">Miral Omar</span><span class="r-av">A</span><span class="r-sp">Administrator</span><span class="r-tot">400</span><span class="r-st">Quotation</span></div>
<div class="rrow" style="top:410.20px"><span class="r-idx">5</span><span class="rc"></span><span class="r-num">#1389</span><span class="r-date">22/07/2025 13:07:07</span><span class="r-cust">Mohannad Kamal</span><span class="r-av">A</span><span class="r-sp">Administrator</span><span class="r-tot">800</span><span class="r-st">Quotation</span></div>
<div class="rrow" style="top:453.75px"><span class="r-idx">6</span><span class="rc"></span><span class="r-num">#1388</span><span class="r-date">22/07/2025 12:32:48</span><span class="r-cust">Zeina ElOraby</span><span class="r-av">A</span><span class="r-sp">Administrator</span><span class="r-tot">1,490</span><span class="r-st">Quotation</span></div>
<div class="rrow" style="top:497.30px"><span class="r-idx">7</span><span class="rc"></span><span class="r-num">#1387</span><span class="r-date">22/07/2025 12:08:56</span><span class="r-cust">Yassein Elkawass</span><span class="r-av">A</span><span class="r-sp">Administrator</span><span class="r-tot">4,025</span><span class="r-st">Quotation</span></div>
<div class="rrow" style="top:540.85px"><span class="r-idx">8</span><span class="rc"></span><span class="r-num">#1384</span><span class="r-date">22/07/2025 11:55:45</span><span class="r-cust">P A V L Y Amir</span><span class="r-av">A</span><span class="r-sp">Administrator</span><span class="r-tot">690</span><span class="r-st">Quotation</span></div>
<div class="rrow" style="top:584.40px"><span class="r-idx">9</span><span class="rc"></span><span class="r-num">#1380</span><span class="r-date">22/07/2025 08:00:57</span><span class="r-cust">Abdelhak hamza</span><span class="r-av">A</span><span class="r-sp">Administrator</span><span class="r-tot">850</span><span class="r-st">Quotation</span></div>
<div class="rrow" style="top:627.95px"><span class="r-idx">10</span><span class="rc"></span><span class="r-num">#1376</span><span class="r-date">22/07/2025 06:40:41</span><span class="r-cust">Abdelhak hamza</span><span class="r-av">A</span><span class="r-sp">Administrator</span><span class="r-tot">4,580</span><span class="r-st">Quotation</span></div>
<div class="rrow" style="top:671.50px"><span class="r-idx">11</span><span class="rc"></span><span class="r-num">#1375</span><span class="r-date">22/07/2025 05:14:01</span><span class="r-cust">Karen Hani Samir</span><span class="r-av">A</span><span class="r-sp">Administrator</span><span class="r-tot">440</span><span class="r-st">Quotation</span></div>
<div class="rrow" style="top:715.05px"><span class="r-idx">12</span><span class="rc"></span><span class="r-num">#1372</span><span class="r-date">22/07/2025 03:11:24</span><span class="r-cust">jana abo el hamed farag ali</span><span class="r-av">A</span><span class="r-sp">Administrator</span><span class="r-tot">750</span><span class="r-st">Quotation</span></div>
<div class="rrow" style="top:758.60px"><span class="r-idx">13</span><span class="rc"></span><span class="r-num">#1370</span><span class="r-date">22/07/2025 00:56:07</span><span class="r-cust">Nassar Mohamed Nassar</span><span class="r-av">A</span><span class="r-sp">Administrator</span><span class="r-tot">2,250</span><span class="r-st">Quotation</span></div>
<div class="rrow" style="top:802.15px"><span class="r-idx">14</span><span class="rc"></span><span class="r-num">#1368</span><span class="r-date">21/07/2025 22:34:34</span><span class="r-cust">Yassin mohamed Mohamed</span><span class="r-av">A</span><span class="r-sp">Administrator</span><span class="r-tot">850</span><span class="r-st">Quotation</span></div>
<div class="rrow" style="top:845.70px"><span class="r-idx">15</span><span class="rc"></span><span class="r-num">#1359</span><span class="r-date">21/07/2025 19:19:47</span><span class="r-cust">Zidane Ahmed Ahmed</span><span class="r-av">A</span><span class="r-sp">Administrator</span><span class="r-tot">700</span><span class="r-st">Quotation</span></div>
<div class="rrow" style="top:889.25px"><span class="r-idx">16</span><span class="rc"></span><span class="r-num">#1358</span><span class="r-date">21/07/2025 18:43:17</span><span class="r-cust">Rahma Taher</span><span class="r-av">A</span><span class="r-sp">Administrator</span><span class="r-tot">550</span><span class="r-st">Quotation</span></div>
 <div class="a" style="left:0;top:913px;width:954px;height:15px;background:#fff"></div>
 <div id="rscroll"></div>
 <div class="a" style="left:916px;top:890px;width:60px;height:50px;border-radius:25px;background:#fff;box-shadow:0 0 10px rgba(0,0,0,0.06)"></div>
 <svg style="left:929px;top:905px" width="20" height="18" viewBox="0 0 20 18"><defs><linearGradient id="br" x1="0" y1="0" x2="1" y2="0"><stop offset="0" stop-color="#e64fb0"/><stop offset="0.5" stop-color="#9a5ae8"/><stop offset="1" stop-color="#4a7bf0"/></linearGradient></defs><path d="M10 1.5C8 0 4.5.5 3.5 3 1 3.5.5 6.5 1.5 8.5 0 10.5 1 14 3.5 14.5 4.5 17 8 17.5 10 16 12 17.5 15.5 17 16.5 14.5 19 14 20 10.5 18.5 8.5 19.5 6.5 19 3.5 16.5 3 15.5.5 12 0 10 1.5z" fill="url(#br)"/><path d="M10 1.5v14.5M5 6h3M12 6h3M4 10.5h4M12 10.5h4" stroke="#fff" stroke-width="1.1" opacity="0.8"/></svg>
</div>

</body></html>
